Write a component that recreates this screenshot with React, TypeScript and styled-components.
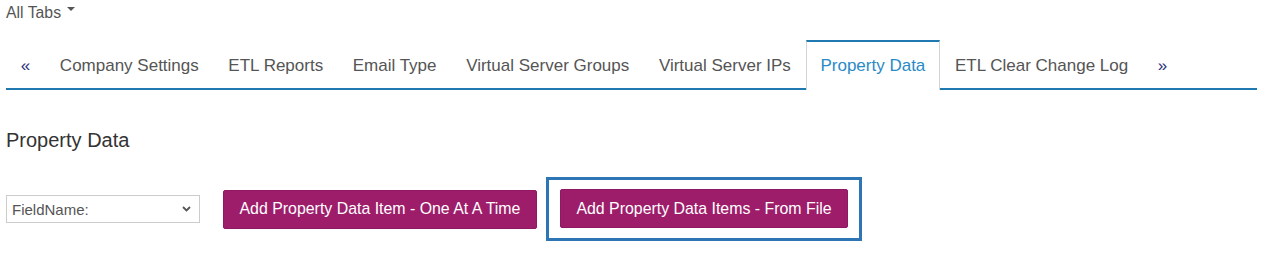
import React, {useState} from "react";
import styled, {createGlobalStyle} from "styled-components";

const GlobalStyle = createGlobalStyle`
    body {
        margin: 0;
        background: #ffffff;
        font-family: "Liberation Sans", Arial, sans-serif;
    }
`

const Page = styled.div`
    padding: 0 10px 0 6px;
`

const AllTabs = styled.div`
    display: flex;
    align-items: flex-start;
    padding-top: 3px;
    height: 20px;
    line-height: 20px;
    font-size: 15.8px;
    color: #555555;
`

const Caret = styled.span`
    display: inline-block;
    margin: 4px 0 0 6px;
    width: 0;
    height: 0;
    border-left: 4px solid transparent;
    border-right: 4px solid transparent;
    border-top: 4px solid #555555;
`

const TabStrip = styled.div`
    display: flex;
    margin-top: 17px;
    border-bottom: 2px solid #1f78b0;
`

const Tab = styled.div<{ $active?: boolean; $arrow?: boolean }>`
    box-sizing: border-box;
    height: ${props => props.$active ? "50px" : "48px"};
    margin-bottom: ${props => props.$active ? "-2px" : "0"};
    padding: 14px 13.8px 12px;
    border-top: 2px solid ${props => props.$active ? "#1f78b0" : "transparent"};
    border-left: 1px solid ${props => props.$active ? "#d4d4d4" : "transparent"};
    border-right: 1px solid ${props => props.$active ? "#d4d4d4" : "transparent"};
    background: #ffffff;
    font-size: 17px;
    line-height: 20px;
    white-space: nowrap;
    color: ${props => props.$active ? "#2a8ac6" : props.$arrow ? "#28307e" : "#555555"};
    cursor: pointer;
`

const Heading = styled.h2`
    margin: 38px 0 0;
    font-size: 20px;
    line-height: 24px;
    font-weight: normal;
    color: #333333;
`

const Controls = styled.div`
    display: flex;
    align-items: center;
    margin-top: 25px;
`

const SelectWrap = styled.div`
    position: relative;
    width: 194px;
    height: 28px;
    margin-right: 23px;
`

const Select = styled.select`
    appearance: none;
    box-sizing: border-box;
    width: 100%;
    height: 100%;
    padding: 0 24px 0 5px;
    border: 1px solid #cccccc;
    border-radius: 0;
    background: #ffffff;
    font-family: "Liberation Sans", Arial, sans-serif;
    font-size: 15px;
    color: #555555;
`

const Chevron = styled.svg`
    position: absolute;
    right: 9px;
    top: 11px;
    pointer-events: none;
`

const Highlight = styled.div`
    margin-left: 9px;
    padding: 9px 11px 10px;
    border: 3px solid #2e75b6;
`

const Button = styled.button`
    height: 39px;
    padding: 0 15.5px;
    border: 1px solid #8e1862;
    border-radius: 2px;
    background: #9d1d6b;
    color: #ffffff;
    font-family: "Liberation Sans", Arial, sans-serif;
    font-size: 15.9px;
    white-space: nowrap;
    cursor: pointer;
`

const tabs = [
    "Company Settings",
    "ETL Reports",
    "Email Type",
    "Virtual Server Groups",
    "Virtual Server IPs",
    "Property Data",
    "ETL Clear Change Log",
]

function App() {

    const [active, setActive] = useState("Property Data")

    return (
        <Page>
            <GlobalStyle/>

            <AllTabs>
                All Tabs
                <Caret/>
            </AllTabs>

            <TabStrip>
                <Tab $arrow>«</Tab>
                {tabs.map(t => (
                    <Tab key={t} $active={t === active} onClick={() => setActive(t)}>
                        {t}
                    </Tab>
                ))}
                <Tab $arrow>»</Tab>
            </TabStrip>

            <Heading>Property Data</Heading>

            <Controls>
                <SelectWrap>
                    <Select defaultValue="">
                        <option value="">FieldName:</option>
                    </Select>
                    <Chevron width="9" height="6" viewBox="0 0 9 6">
                        <path d="M1 1 L4.5 4.5 L8 1" fill="none" stroke="#555555" strokeWidth="1.8"/>
                    </Chevron>
                </SelectWrap>

                <Button>Add Property Data Item - One At A Time</Button>

                <Highlight>
                    <Button>Add Property Data Items - From File</Button>
                </Highlight>
            </Controls>
        </Page>
    )
}

export default App
